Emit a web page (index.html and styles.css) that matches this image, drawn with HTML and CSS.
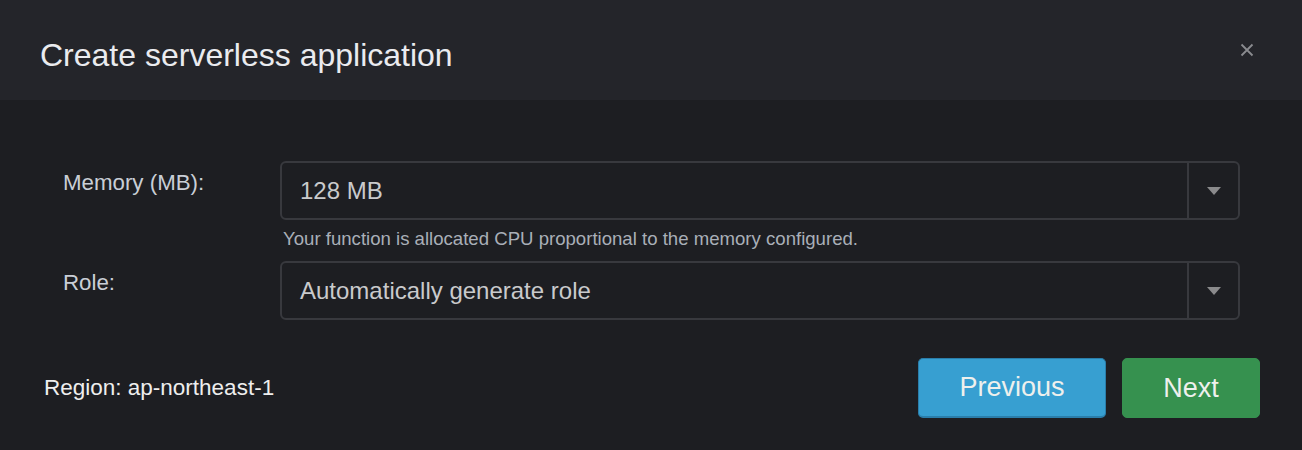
FILE: index.html
```html
<!DOCTYPE html>
<html>
<head>
<meta charset="utf-8">
<link rel="stylesheet" href="styles.css">
</head>
<body>
<div class="modal">
  <div class="modal-header">
    <h1 class="title">Create serverless application</h1>
    <button class="close" aria-label="Close">
      <svg width="14" height="14" viewBox="0 0 14 14"><path d="M1.5 1.5 L12.5 12.5 M12.5 1.5 L1.5 12.5" stroke="#8a8b8f" stroke-width="1.8" fill="none"/></svg>
    </button>
  </div>
  <div class="modal-body">
    <div class="form">
      <label class="label">Memory (MB):</label>
      <div class="field">
        <div class="select">
          <span class="select-value">128 MB</span>
          <span class="select-toggle"><span class="caret"></span></span>
        </div>
        <div class="help">Your function is allocated CPU proportional to the memory configured.</div>
      </div>
      <label class="label">Role:</label>
      <div class="field">
        <div class="select">
          <span class="select-value">Automatically generate role</span>
          <span class="select-toggle"><span class="caret"></span></span>
        </div>
      </div>
    </div>
    <div class="footer">
      <div class="region">Region: ap-northeast-1</div>
      <div class="actions">
        <button class="btn btn-prev">Previous</button>
        <button class="btn btn-next">Next</button>
      </div>
    </div>
  </div>
</div>
</body>
</html>
```
FILE: styles.css
```css
html, body {
  margin: 0;
  padding: 0;
  background: #1d1e22;
  font-family: "Liberation Sans", Arial, sans-serif;
}
.modal {
  width: 1302px;
  height: 450px;
  background: #1d1e22;
  display: flex;
  flex-direction: column;
}
.modal-header {
  height: 100px;
  box-sizing: border-box;
  background: #24252a;
  display: flex;
  align-items: center;
  justify-content: space-between;
  padding: 11px 48px 0 40px;
}
.title {
  margin: 0;
  font-size: 32px;
  font-weight: normal;
  color: #eaebef;
}
.close {
  background: none;
  border: 0;
  padding: 0;
  margin-top: -12px;
  width: 14px;
  height: 14px;
  display: flex;
}
.modal-body {
  flex: 1;
  display: flex;
  flex-direction: column;
}
.form {
  display: grid;
  grid-template-columns: 217px 960px;
  row-gap: 12px;
  padding: 61px 0 0 63px;
}
.label {
  font-size: 22.3px;
  color: #c9ced6;
  padding-top: 9px;
}
.select {
  height: 59px;
  box-sizing: border-box;
  border: 2px solid #38393e;
  border-radius: 6px;
  display: flex;
  align-items: center;
}
.select-value {
  flex: 1;
  padding-left: 18px;
  font-size: 24px;
  color: #c9cacc;
}
.select-toggle {
  width: 49px;
  align-self: stretch;
  border-left: 2px solid #38393e;
  display: flex;
  align-items: center;
  justify-content: center;
}
.caret {
  width: 0;
  height: 0;
  border-left: 7px solid transparent;
  border-right: 7px solid transparent;
  border-top: 8px solid #8a8a8c;
}
.help {
  font-size: 18.6px;
  color: #a9afb8;
  padding: 9px 0 0 3px;
  line-height: 20px;
}
.footer {
  display: flex;
  align-items: center;
  justify-content: space-between;
  padding: 38px 42px 0 44px;
}
.region {
  font-size: 22.5px;
  color: #eeeeee;
}
.actions {
  display: flex;
  gap: 16px;
}
.btn {
  height: 60px;
  border-radius: 5px;
  font-family: "Liberation Sans", Arial, sans-serif;
  font-size: 27px;
  color: #eef0ed;
  padding: 0;
  cursor: pointer;
}
.btn-prev {
  width: 188px;
  background: #379fd1;
  border: 1px solid #2a7eab;
  border-bottom-width: 2px;
}
.btn-next {
  width: 138px;
  background: #36914f;
  border: 1px solid #36914f;
}
```
